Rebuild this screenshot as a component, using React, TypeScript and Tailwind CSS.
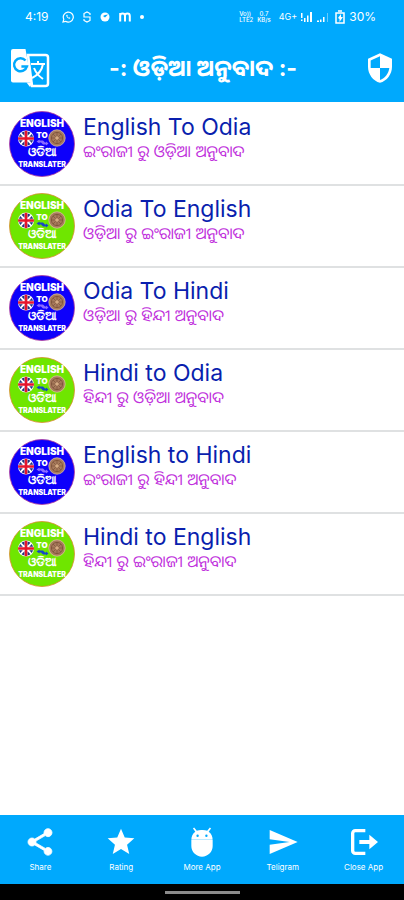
import type { ReactNode } from 'react';

interface Translation {
  title: string;
  subtitle: string;
  tone: 'blue' | 'green';
}

const translations: Translation[] = [
  { title: 'English To Odia', subtitle: 'ଇଂରାଜୀ ରୁ ଓଡ଼ିଆ ଅନୁବାଦ', tone: 'blue' },
  { title: 'Odia To English', subtitle: 'ଓଡ଼ିଆ ରୁ ଇଂରାଜୀ ଅନୁବାଦ', tone: 'green' },
  { title: 'Odia To Hindi', subtitle: 'ଓଡ଼ିଆ ରୁ ହିନ୍ଦୀ ଅନୁବାଦ', tone: 'blue' },
  { title: 'Hindi to Odia', subtitle: 'ହିନ୍ଦୀ ରୁ ଓଡ଼ିଆ ଅନୁବାଦ', tone: 'green' },
  { title: 'English to Hindi', subtitle: 'ଇଂରାଜୀ ରୁ ହିନ୍ଦୀ ଅନୁବାଦ', tone: 'blue' },
  { title: 'Hindi to English', subtitle: 'ହିନ୍ଦୀ ରୁ ଇଂରାଜୀ ଅନୁବାଦ', tone: 'green' },
];

const getBadgeColor = (tone: string) => {
  switch (tone) {
    case 'blue':
      return { fill: '#0d00fb', ring: '#b03a9c' };
    default:
      return { fill: '#6fe600', ring: '#d98b2b' };
  }
};

function Badge({ tone }: { tone: string }) {
  const { fill, ring } = getBadgeColor(tone);
  return (
    <svg viewBox="0 0 66 66" className="w-[66px] h-[66px] shrink-0" aria-hidden="true">
      <circle cx="33" cy="33" r="32.5" fill={fill} stroke={ring} strokeWidth="0.8" />
      <g fill="#fff" textAnchor="middle" className="font-['Inter','Noto_Sans',sans-serif]">
        <text x="33" y="16" fontSize="10" fontWeight="900">ENGLISH</text>
        <text x="33" y="27" fontSize="8" fontWeight="900">TO</text>
        <text x="33" y="45" fontSize="12" fontWeight="700">ଓଡିଆ</text>
        <text x="33" y="56" fontSize="7" fontWeight="900">TRANSLATER</text>
      </g>
      {/* Union flag */}
      <circle cx="17" cy="27.5" r="8" fill="#fff" />
      <path d="M12.5 21.7l3 3v-4.3a7.4 7.4 0 00-3 1.3zM21.5 21.7l-3 3v-4.3a7.4 7.4 0 013 1.3zM12.5 33.3l3-3v4.3a7.4 7.4 0 01-3-1.3zM21.5 33.3l-3-3v4.3a7.4 7.4 0 003-1.3zM11.2 23.1l2.6 2.6H9.9zM22.8 23.1l-2.6 2.6h3.9zM11.2 31.9l2.6-2.6H9.9zM22.8 31.9l-2.6-2.6h3.9z" fill="#22337f" />
      <path d="M15.7 19.8h2.6v6.4h6.6v2.6h-6.6v6.4h-2.6v-6.4H9.1v-2.6h6.6z" fill="#e5152c" />
      {/* Arrows between the flag and the wheel */}
      <path d="M27.5 30.5l3-2v1H34l2 2h1v-1l2.5 2-2.5 2v-1h-3l-2-2h-1.5v1z" fill={tone === 'blue' ? '#8b6bff' : '#1746c9'} />
      {/* Konark wheel */}
      <circle cx="48" cy="27" r="8.2" fill="#a77a5c" stroke="#e3c9a8" strokeWidth="0.7" />
      <circle cx="48" cy="27" r="5.6" fill="none" stroke="#7b5138" strokeWidth="0.8" />
      <path d="M48 21v12M42 27h12M44 23l8 8M52 23l-8 8" stroke="#7b5138" strokeWidth="0.7" />
      <circle cx="48" cy="27" r="1.8" fill="#d6ab83" />
    </svg>
  );
}

function StatusBar() {
  return (
    <div className="flex h-[34px] items-center justify-between pl-[25px] pr-7 text-xs">
      <div className="flex items-center gap-[9px]">
        <span className="mr-1">4:19</span>
        <svg className="w-3 h-3" viewBox="0 0 12 12" fill="none" stroke="currentColor" strokeWidth="1.2">
          <path d="M1 11l.8-2.7A5 5 0 113.6 10.3z" />
          <path d="M4.2 4c0 2 1.8 3.8 3.8 3.8l.3-1.1L7 6.2l-.5.5-1.2-1.2.5-.5-.5-1.3z" fill="currentColor" stroke="none" />
        </svg>
        <svg className="w-2 h-3" viewBox="0 0 8 12" fill="none" stroke="currentColor" strokeWidth="1.2">
          <path d="M7 4V2.5L4 1 1 2.5V6h6v3.5L4 11 1 9.5V8" />
        </svg>
        <svg className="w-2.5 h-2.5" viewBox="0 0 10 10">
          <circle cx="5" cy="5" r="4.5" fill="#fff" />
          <path d="M3 4l2 1.5 3-3L5 3z" fill="#00a9fd" />
        </svg>
        <svg className="w-3 h-2.5" viewBox="0 0 12 10" fill="none" stroke="currentColor" strokeWidth="2">
          <path d="M1.2 9.5V1M1.2 4A2.4 2.4 0 016 4v5.5M6 4a2.4 2.4 0 014.8 0v5.5" />
        </svg>
        <span className="w-1 h-1 rounded-full bg-white" />
      </div>
      <div className="flex items-center gap-1">
        <span className="text-[6px] leading-[6px] font-medium">Vo))<br />LTE2</span>
        <span className="text-[6px] leading-[6px] text-center font-medium">0.7<br />KB/s</span>
        <span className="ml-1 text-[9px]">4G+</span>
        <svg className="w-3 h-2.5" viewBox="0 0 12 10" fill="currentColor">
          <path d="M0 1h1.5v5H0zM0 7.5h1.5V9H0zM3 6h1.5v4H3zM6 3.5h1.5V10H6zM9 0h2v10H9z" />
        </svg>
        <svg className="w-3 h-2.5" viewBox="0 0 12 10" fill="currentColor">
          <path d="M0 8.5h2V10H0zM3 7.5h1.5V10H3zM6 5h1.5v5H6z" />
          <path d="M10 1h1v9h-1z" opacity="0.4" />
        </svg>
        <svg className="ml-0.5 w-2.5 h-3.5" viewBox="0 0 10 14" fill="none" stroke="currentColor" strokeWidth="1.5">
          <path d="M3 1h4M1 3h8v10H1z" />
          <path d="M3 8l3-4v3h2l-3.5 5V9z" fill="currentColor" stroke="none" />
        </svg>
        <span>30%</span>
      </div>
    </div>
  );
}

interface FooterButtonProps {
  label: string;
  children: ReactNode;
}

function FooterButton({ label, children }: FooterButtonProps) {
  return (
    <button type="button" className="flex flex-1 flex-col items-center gap-1 pt-[11px]">
      <svg className="w-8 h-8" viewBox="0 0 24 24" fill="currentColor" aria-hidden="true">
        {children}
      </svg>
      <span className="text-[8px] leading-[10px]">{label}</span>
    </button>
  );
}

export default function App() {
  return (
    <div className="flex min-h-screen flex-col bg-white font-['Inter','Noto_Sans_Oriya',sans-serif]">
      <header className="bg-[#00a9fd] text-white">
        <StatusBar />
        <div className="flex h-[68px] items-center justify-between pl-2.5 pr-2">
          <button type="button" aria-label="Translate">
            <svg className="w-10 h-10" viewBox="0 0 40 40" aria-hidden="true">
              <path d="M18 7h17.5A2.5 2.5 0 0138 9.5v26a2.5 2.5 0 01-2.5 2.5H22z" fill="none" stroke="#fff" strokeWidth="2.5" />
              <path d="M3 1h12.5l6 33.5H3a2 2 0 01-2-2V3a2 2 0 012-2z" fill="#fff" />
              <path d="M16.5 34.5h6L20 39z" fill="#fff" />
              <path d="M15.5 12.5a6.5 6.5 0 101.4 6h-5.5" fill="none" stroke="#00a9fd" strokeWidth="2.5" />
              <path d="M21 16h14M28 13v3M33 16c-1 6-5 11-11 14M24 20c2 5 6 9 9 11" fill="none" stroke="#fff" strokeWidth="2" />
            </svg>
          </button>
          <h1 className="text-[23px] font-bold">-: ଓଡ଼ିଆ ଅନୁବାଦ :-</h1>
          <button type="button" aria-label="Privacy" className="flex w-10 justify-end">
            <svg className="w-8 h-8" viewBox="0 0 24 24" fill="currentColor" aria-hidden="true">
              <path d="M12 1L3 5v6c0 5.55 3.84 10.74 9 12 5.16-1.26 9-6.45 9-12V5l-9-4zm0 10.99h7c-.53 4.12-3.28 7.79-7 8.94V12H5V6.3l7-3.11v8.8z" />
            </svg>
          </button>
        </div>
      </header>

      <main className="flex-1 pt-0.5">
        <ul>
          {translations.map((item) => (
            <li key={item.title} className="border-b-2 border-[#dfe1e2]">
              <button type="button" className="flex w-full items-start gap-2 px-[9px] py-[7px] text-left">
                <Badge tone={item.tone} />
                <span className="flex flex-col pt-px">
                  <span className="text-[23px] leading-[30px] text-[#0a1fae]">{item.title}</span>
                  <span className="text-base leading-[18px] text-[#c030dc]">{item.subtitle}</span>
                </span>
              </button>
            </li>
          ))}
        </ul>
      </main>

      <footer>
        <nav className="flex h-[69px] items-start bg-[#00a9fd] text-white">
          <FooterButton label="Share">
            <path d="M18 16.08c-.76 0-1.44.3-1.96.77L8.91 12.7c.05-.23.09-.46.09-.7s-.04-.47-.09-.7l7.05-4.11c.54.5 1.25.81 2.04.81 1.66 0 3-1.34 3-3s-1.34-3-3-3-3 1.34-3 3c0 .24.04.47.09.7L8.04 9.81C7.5 9.31 6.79 9 6 9c-1.66 0-3 1.34-3 3s1.34 3 3 3c.79 0 1.5-.31 2.04-.81l7.12 4.16c-.05.21-.08.43-.08.65 0 1.61 1.31 2.92 2.92 2.92s2.92-1.31 2.92-2.92-1.31-2.92-2.92-2.92z" stroke="currentColor" strokeWidth="0.6" />
          </FooterButton>
          <FooterButton label="Rating">
            <path d="M12 17.27L18.18 21l-1.64-7.03L22 9.24l-7.19-.61L12 2 9.19 8.63 2 9.24l5.46 4.73L5.82 21z" />
          </FooterButton>
          <FooterButton label="More App">
            <path d="M4 10.4h16V15a8 8 0 01-16 0zM17 4.3l1.8-2.5-.9-.7-2 2.5A9 9 0 0012 3a9 9 0 00-3.9.6l-2-2.500-.9.7L7 4.3C5 5.7 4 8 4 10.5h16c0-2.500-1-4.8-3-6.2zM8.7 8.2a.9.9 0 110-1.8.9.9 0 010 1.8zm6.6 0a.9.9 0 110-1.8.9.9 0 010 1.8z" />
          </FooterButton>
          <FooterButton label="Teligram">
            <path d="M2.01 21L23 12 2.01 3 2 10l15 2-15 2z" />
          </FooterButton>
          <FooterButton label="Close App">
            <path d="M13 3.5H5.5a2 2 0 00-2 2v13a2 2 0 002 2H13" fill="none" stroke="currentColor" strokeWidth="2.5" />
            <path d="M8.5 10.5H16v-4l6.5 5.5-6.5 5.5v-4H8.5z" />
          </FooterButton>
        </nav>
        <div className="flex h-4 items-center justify-center bg-black">
          <div className="h-[3px] w-[75px] bg-[#8b8b8b]" />
        </div>
      </footer>
    </div>
  );
}
